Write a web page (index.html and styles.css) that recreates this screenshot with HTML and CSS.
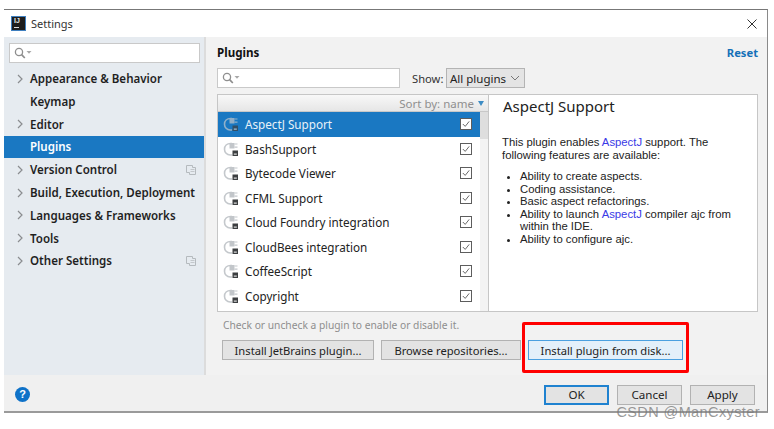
FILE: index.html
```html
<!DOCTYPE html>
<html lang="en">
<head>
<meta charset="utf-8">
<title>Settings</title>
<link rel="stylesheet" href="styles.css">
</head>
<body>
<svg class="defs" width="0" height="0" aria-hidden="true">
  <symbol id="plug" viewBox="0 0 16 16">
    <path d="M9 2.5H7.5C4 2.5 1.5 5 1.5 8.2s2.4 5.8 5.6 5.8H9" fill="none" stroke="#c4c8cc" stroke-width="1.6"/>
    <path d="M6.5 2h5v5.5h-5z" fill="#c2c6ca"/>
    <path d="M11.5 3h3M11.5 6.2h3" stroke="#c4c8cc" stroke-width="1.2"/>
    <rect class="plug-box" x="9.5" y="9.5" width="5.5" height="5.5" fill="#3c3f41"/>
    <rect x="10.8" y="12.6" width="3" height="1" fill="#fff"/>
  </symbol>
  <symbol id="search" viewBox="0 0 18 12">
    <circle cx="5" cy="5" r="3.6" fill="none" stroke="#8e8e8e" stroke-width="1.3"/>
    <path d="M7.6 7.6l3.2 3.4" stroke="#8e8e8e" stroke-width="1.7"/>
    <path d="M12.5 4h5l-2.5 2.8z" fill="#a8a8a8"/>
  </symbol>
  <symbol id="chev" viewBox="0 0 8 10">
    <path d="M2 1l4 4-4 4" fill="none" stroke="#8b8d90" stroke-width="1.2"/>
  </symbol>
  <symbol id="copy" viewBox="0 0 10 10">
    <path d="M.5 .5h6v2h3v7h-6v-2h-3z" fill="none" stroke="#b5babe"/>
    <path d="M4.5 4.5h4M4.5 6.5h4" stroke="#c3c7cb"/>
  </symbol>
  <symbol id="check" viewBox="0 0 12 12">
    <rect x=".5" y=".5" width="11" height="11" fill="#fff" stroke="#5d5d5d"/>
    <path d="M2.8 6l2.4 2.4 4-5" fill="none" stroke="#6a6a6a" stroke-width="1"/>
  </symbol>
</svg>

<div class="window">
  <header class="titlebar">
    <span class="logo"><span class="logo-text">IJ</span><span class="logo-bar"></span></span>
    <span class="title">Settings</span>
    <svg class="close" viewBox="0 0 10 10" width="10" height="10"><path d="M.5 .5l9 9M9.5 .5l-9 9" stroke="#333" stroke-width="1"/></svg>
  </header>

  <div class="main">
    <nav class="sidebar">
      <div class="search side-search"><svg class="search-icon"><use href="#search"/></svg></div>
      <ul class="tree">
        <li class="node"><svg class="chev"><use href="#chev"/></svg><span>Appearance &amp; Behavior</span></li>
        <li class="node leaf"><span>Keymap</span></li>
        <li class="node"><svg class="chev"><use href="#chev"/></svg><span>Editor</span></li>
        <li class="node leaf active"><span>Plugins</span></li>
        <li class="node"><svg class="chev"><use href="#chev"/></svg><span>Version Control</span><svg class="copy"><use href="#copy"/></svg></li>
        <li class="node"><svg class="chev"><use href="#chev"/></svg><span>Build, Execution, Deployment</span></li>
        <li class="node"><svg class="chev"><use href="#chev"/></svg><span>Languages &amp; Frameworks</span></li>
        <li class="node"><svg class="chev"><use href="#chev"/></svg><span>Tools</span></li>
        <li class="node"><svg class="chev"><use href="#chev"/></svg><span>Other Settings</span><svg class="copy"><use href="#copy"/></svg></li>
      </ul>
    </nav>

    <section class="content">
      <div class="heading">
        <h1>Plugins</h1>
        <a class="reset">Reset</a>
      </div>
      <div class="filters">
        <div class="search main-search"><svg class="search-icon"><use href="#search"/></svg></div>
        <span class="show">Show:</span>
        <div class="select"><span class="select-text">All plugins</span><svg class="select-arrow" viewBox="0 0 10 6" width="10" height="6"><path d="M1 1l4 4 4-4" fill="none" stroke="#777"/></svg></div>
      </div>

      <div class="panels">
        <div class="list">
          <div class="sort">Sort by: name<span class="sort-arrow"></span></div>
          <div class="list-body">
            <ul class="rows">
              <li class="row selected"><svg class="plug"><use href="#plug"/></svg><span class="row-name">AspectJ Support</span><svg class="check"><use href="#check"/></svg></li>
              <li class="row"><svg class="plug"><use href="#plug"/></svg><span class="row-name">BashSupport</span><svg class="check"><use href="#check"/></svg></li>
              <li class="row"><svg class="plug"><use href="#plug"/></svg><span class="row-name">Bytecode Viewer</span><svg class="check"><use href="#check"/></svg></li>
              <li class="row"><svg class="plug"><use href="#plug"/></svg><span class="row-name">CFML Support</span><svg class="check"><use href="#check"/></svg></li>
              <li class="row"><svg class="plug"><use href="#plug"/></svg><span class="row-name">Cloud Foundry integration</span><svg class="check"><use href="#check"/></svg></li>
              <li class="row"><svg class="plug"><use href="#plug"/></svg><span class="row-name">CloudBees integration</span><svg class="check"><use href="#check"/></svg></li>
              <li class="row"><svg class="plug"><use href="#plug"/></svg><span class="row-name">CoffeeScript</span><svg class="check"><use href="#check"/></svg></li>
              <li class="row"><svg class="plug"><use href="#plug"/></svg><span class="row-name">Copyright</span><svg class="check"><use href="#check"/></svg></li>
            </ul>
            <div class="scrollbar"><div class="thumb"></div></div>
          </div>
        </div>
        <article class="detail">
          <h2>AspectJ Support</h2>
          <p>This plugin enables <a>AspectJ</a> support. The following features are available:</p>
          <ul>
            <li>Ability to create aspects.</li>
            <li>Coding assistance.</li>
            <li>Basic aspect refactorings.</li>
            <li>Ability to launch <a>AspectJ</a> compiler ajc from within the IDE.</li>
            <li>Ability to configure ajc.</li>
          </ul>
        </article>
      </div>

      <p class="hint">Check or uncheck a plugin to enable or disable it.</p>
      <div class="actions">
        <button class="btn jb">Install JetBrains plugin...</button>
        <button class="btn browse">Browse repositories...</button>
        <button class="btn disk">Install plugin from disk...</button>
      </div>
    </section>
  </div>

  <footer class="footer">
    <span class="help">?</span>
    <div class="footer-btns">
      <button class="btn ok">OK</button>
      <button class="btn cancel">Cancel</button>
      <button class="btn apply">Apply</button>
    </div>
  </footer>
</div>

<div class="red-box"></div>
<div class="watermark">CSDN @ManCxyster</div>
</body>
</html>
```
FILE: styles.css
```css
* { box-sizing: border-box; }
html, body { margin: 0; padding: 0; }
body {
  width: 774px;
  height: 429px;
  overflow: hidden;
  position: relative;
  background: #fff;
  font-family: "Noto Sans", "Liberation Sans", sans-serif;
  color: #1c1c1c;
}
ul { list-style: none; margin: 0; padding: 0; }
.defs { position: absolute; }

.window {
  width: 764px;
  height: 404px;
  margin: 9px 0 0 4px;
  border-top: 1px solid #777;
  border-right: 1px solid #8a8a8a;
  border-bottom: 2px solid #9a9a9a;
  display: flex;
  flex-direction: column;
}

.titlebar {
  height: 27px;
  flex: none;
  display: flex;
  align-items: center;
  padding-left: 7px;
  background: #fff;
}
.logo {
  width: 15px;
  height: 15px;
  background: #1d1d1d;
  border: 1px solid #3f7fbf;
  position: relative;
  display: block;
  margin-right: 5px;
}
.logo-text {
  position: absolute;
  left: 2px;
  top: 0;
  font: bold 7px/8px "Liberation Sans", sans-serif;
  color: #e8e8e8;
}
.logo-bar {
  position: absolute;
  left: 2px;
  bottom: 2px;
  width: 5px;
  height: 1px;
  background: #ddd;
}
.title { font-size: 11px; color: #333; }
.close { margin-left: auto; margin-right: 10px; }

.main { flex: 1; min-height: 0; display: flex; }

.sidebar {
  width: 202px;
  flex: none;
  background: #e6ebf0;
  border-right: 2px solid #dcdcdc;
  padding-top: 6px;
}
.search {
  height: 20px;
  background: #fff;
  border: 1px solid #c9c9c9;
  display: flex;
  align-items: center;
  padding-left: 4px;
}
.search-icon { width: 18px; height: 12px; }
.side-search { width: 191px; margin-left: 5px; }
.tree { margin-top: 4.2px; }
.node {
  height: 22.8px;
  display: flex;
  align-items: center;
  padding-left: 12px;
  font-size: 11.55px;
  font-weight: 600;
  color: #1f1f1f;
}
.node.leaf { padding-left: 26px; }
.node.active { background: #1a78c2; color: #fff; }
.chev { width: 8px; height: 10px; margin-right: 6px; }
.copy { width: 10px; height: 10px; margin-left: auto; margin-right: 8px; }

.content {
  flex: 1;
  min-width: 0;
  background: #f2f2f2;
  padding: 0 9px 0 11px;
  display: flex;
  flex-direction: column;
}
.heading {
  height: 31px;
  flex: none;
  display: flex;
  align-items: center;
  justify-content: space-between;
}
.heading h1 { margin: 0; font-size: 11.6px; font-weight: 700; color: #111; }
.reset { font-size: 11.2px; font-weight: 700; color: #1470b8; }

.filters { height: 20px; flex: none; display: flex; align-items: center; }
.main-search { width: 183px; }
.show { font-size: 11.2px; margin-left: 12px; width: 34px; flex: none; color: #333; }
.select {
  width: 79px;
  flex: none;
  height: 20px;
  display: flex;
  align-items: center;
  justify-content: space-between;
  padding: 0 4px 0 3px;
  background: #e4e4e4;
  border: 1px solid #b4b4b4;
  font-size: 11.5px;
  color: #222;
}
.select-text { white-space: nowrap; }

.panels {
  flex: none;
  height: 218px;
  margin-top: 6px;
  display: flex;
  border: 1px solid #c6c6c6;
  background: #fff;
}
.list { width: 270px; flex: none; display: flex; flex-direction: column; }
.sort {
  height: 17px;
  flex: none;
  display: flex;
  align-items: center;
  justify-content: flex-end;
  padding-right: 4px;
  font-size: 11.5px;
  color: #8f8f8f;
  background: linear-gradient(#f8f8f8, #e6e6e6);
  border-bottom: 1px solid #c8c8c8;
}
.sort-arrow {
  width: 0;
  height: 0;
  margin-left: 4px;
  border-left: 3.5px solid transparent;
  border-right: 3.5px solid transparent;
  border-top: 5px solid #3d8cc4;
}
.list-body { flex: 1; min-height: 0; display: flex; overflow: hidden; }
.rows { width: 262px; flex: none; }
.row {
  height: 24.5px;
  display: flex;
  align-items: center;
  padding-left: 5px;
  font-size: 11.7px;
  color: #222;
}
.row.selected { background: #1a78c2; color: #e8f1f8; }
.row.selected .plug { opacity: .7; }
.plug { width: 16px; height: 16px; margin-right: 6px; }
.row-name { flex: 1; }
.check { width: 12px; height: 12px; margin-right: 8px; }
.scrollbar { flex: 1; background: #f3f3f3; }
.thumb { height: 27px; background: #dedede; }

.detail {
  flex: 1;
  min-width: 0;
  border-left: 1px solid #c6c6c6;
  padding: 0 14px 0 13px;
  font: 11.3px/12.5px "Liberation Sans", sans-serif;
  color: #222;
}
.detail h2 {
  margin: 0 0 19px 1px;
  font: 400 15px/22px "Noto Sans", sans-serif;
  color: #222;
}
.detail p { margin: 0 0 9px; }
.detail a { color: #3a3ae6; }
.detail ul { padding-left: 18px; list-style: disc; }

.hint {
  margin: 6px 0 0 6px;
  height: 14px;
  font-size: 10.25px;
  line-height: 14px;
  color: #8e8e8e;
  flex: none;
}
.actions { margin: 8px 0 0 5px; display: flex; gap: 7px; flex: none; }
.btn {
  height: 20px;
  padding: 0;
  background: #e3e3e3;
  border: 1px solid #b2b2b2;
  font: 11.2px "Noto Sans", sans-serif;
  color: #222;
}
.jb { width: 152px; }
.browse { width: 140px; }
.disk { width: 155px; background: #e3f0fa; border-color: #4aa0e0; }

.footer {
  height: 36px;
  flex: none;
  background: #f0f0f0;
  display: flex;
  align-items: center;
  justify-content: space-between;
  padding: 3px 12px 0 11px;
}
.help {
  width: 15px;
  height: 15px;
  border-radius: 50%;
  background: #0f72c8;
  color: #fff;
  font: bold 11px/15px "Liberation Sans", sans-serif;
  text-align: center;
}
.footer-btns { display: flex; gap: 8px; }
.ok, .cancel, .apply { width: 65px; height: 20px; font-size: 11.6px; }
.ok { background: #e3e3e3; border: 2px solid #1f82d0; }

.red-box {
  position: absolute;
  left: 522px;
  top: 322px;
  width: 167px;
  height: 51px;
  border: 3px solid #ff0000;
  border-radius: 2px;
}
.watermark {
  position: absolute;
  right: 14px;
  top: 403px;
  font: 14.5px/18px "Liberation Sans", sans-serif;
  color: rgba(120, 120, 120, .75);
  letter-spacing: .4px;
}
```
